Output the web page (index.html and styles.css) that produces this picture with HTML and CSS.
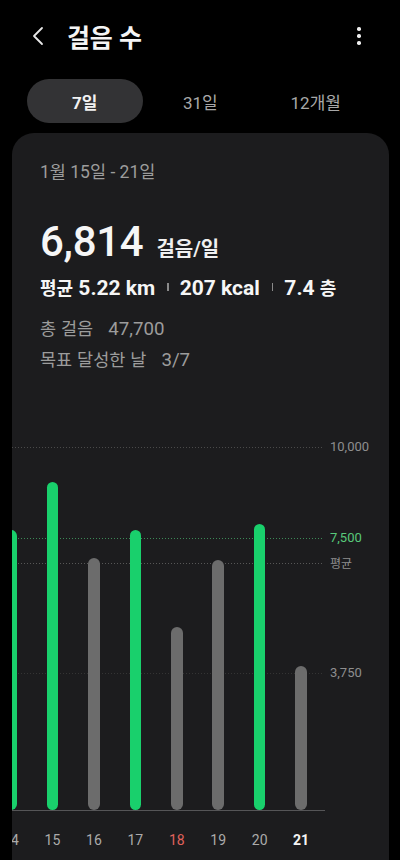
FILE: index.html
```html
<!DOCTYPE html>
<html lang="ko">
<head>
<meta charset="utf-8">
<title>걸음 수</title>
<link rel="stylesheet" href="styles.css">
</head>
<body>
<div class="screen">
  <header class="topbar">
    <button class="back" aria-label="뒤로">
      <svg width="14" height="20" viewBox="0 0 14 20"><path d="M11 2 L3 10 L11 18" fill="none" stroke="#e8e8e8" stroke-width="1.8" stroke-linecap="round" stroke-linejoin="round"/></svg>
    </button>
    <h1 class="title">걸음 수</h1>
    <button class="more" aria-label="더보기">
      <span class="dot"></span><span class="dot"></span><span class="dot"></span>
    </button>
  </header>

  <nav class="tabs">
    <div class="tab active">7일</div>
    <div class="tab">31일</div>
    <div class="tab">12개월</div>
  </nav>

  <section class="card">
    <div class="summary">
      <div class="range">1월 15일 - 21일</div>
      <div class="big">
        <span class="big-num">6,814</span>
        <span class="big-unit">걸음/일</span>
      </div>
      <div class="stats">
        <span class="ko">평균</span><span class="num">&nbsp;5.22 km</span>
        <span class="sep"></span>
        <span class="num">207 kcal</span>
        <span class="sep"></span>
        <span class="num">7.4&nbsp;</span><span class="ko">층</span>
      </div>
      <div class="info"><span class="info-label">총 걸음</span><span class="info-num">47,700</span></div>
      <div class="info"><span class="info-label">목표 달성한 날</span><span class="info-num">3/7</span></div>
    </div>

    <div class="chart">
      <div class="plot">
        <div class="grid g10000" style="bottom: 362px"><span class="ylabel">10,000</span></div>
        <div class="grid g7500" style="bottom: 271px"><span class="ylabel green">7,500</span></div>
        <div class="grid gavg" style="bottom: 246px"><span class="ylabel small">평균</span></div>
        <div class="grid g3750" style="bottom: 136px"><span class="ylabel">3,750</span></div>
        <div class="bars">
          <div class="col"><div class="bar on" style="height: 280px"></div></div>
          <div class="col"><div class="bar on" style="height: 328px"></div></div>
          <div class="col"><div class="bar" style="height: 252px"></div></div>
          <div class="col"><div class="bar on" style="height: 280px"></div></div>
          <div class="col"><div class="bar" style="height: 183px"></div></div>
          <div class="col"><div class="bar" style="height: 250px"></div></div>
          <div class="col"><div class="bar on" style="height: 286px"></div></div>
          <div class="col"><div class="bar" style="height: 144px"></div></div>
        </div>
        <div class="baseline"></div>
      </div>
      <div class="xlabels">
        <div class="xl">14</div>
        <div class="xl">15</div>
        <div class="xl">16</div>
        <div class="xl">17</div>
        <div class="xl red">18</div>
        <div class="xl">19</div>
        <div class="xl">20</div>
        <div class="xl today">21</div>
      </div>
    </div>
  </section>
</div>
</body>
</html>
```
FILE: styles.css
```css
* { box-sizing: border-box; }
html, body {
  margin: 0;
  padding: 0;
  background: #000;
}
body {
  width: 400px;
  height: 860px;
  overflow: hidden;
  font-family: Roboto, "Noto Sans CJK KR", sans-serif;
  color: #fff;
}
.screen {
  width: 400px;
  height: 860px;
  overflow: hidden;
}
.topbar {
  height: 72px;
  display: flex;
  align-items: center;
  padding: 0 0 0 31px;
}
.back, .more {
  background: none;
  border: 0;
  padding: 0;
  margin: 0;
  display: flex;
  cursor: pointer;
}
.back { width: 14px; height: 20px; }
.title {
  margin: 0 0 0 22px;
  font-family: "Noto Sans CJK KR", sans-serif;
  font-weight: 700;
  font-size: 25px;
  line-height: 30px;
  color: #f4f4f4;
  flex: 1;
  letter-spacing: -0.3px;
}
.more {
  flex-direction: column;
  align-items: center;
  gap: 3.6px;
  width: 10px;
  margin-right: 36px;
}
.dot {
  width: 3.4px;
  height: 3.4px;
  border-radius: 50%;
  background: #eee;
}
.tabs {
  margin-top: 7px;
  padding: 0 26.5px 0 27px;
  display: grid;
  grid-template-columns: repeat(3, 1fr);
  height: 44px;
}
.tab {
  display: flex;
  align-items: center;
  justify-content: center;
  border-radius: 22px;
  font-size: 17px;
  color: #a8a8a8;
}
.tab.active {
  background: #333335;
  color: #f2f2f2;
  font-weight: 700;
}
.card {
  margin: 10px 11px 0 12px;
  height: 760px;
  background: #1c1c1e;
  border-radius: 22px;
  overflow: hidden;
}
.summary {
  padding: 27px 0 0 28px;
}
.range {
  font-size: 17.5px;
  line-height: 24px;
  color: #9c9c9c;
}
.big {
  margin-top: 33px;
  display: flex;
  align-items: baseline;
  height: 50px;
}
.big-num {
  font-size: 42px;
  line-height: 50px;
  font-weight: 500;
  color: #f6f6f6;
  letter-spacing: -0.3px;
}
.big-unit {
  margin-left: 13px;
  font-size: 20px;
  font-weight: 600;
  color: #f0f0f0;
}
.stats {
  margin-top: 7px;
  height: 26px;
  display: flex;
  align-items: baseline;
  font-weight: 700;
  color: #f6f6f6;
  white-space: pre;
}
.stats .ko {
  font-family: "Noto Sans CJK KR", sans-serif;
  font-size: 18px;
}
.stats .num {
  font-size: 21px;
  line-height: 26px;
}
.sep {
  align-self: center;
  width: 1.5px;
  height: 8px;
  background: #8a8a8a;
  margin: 0 11px 0 12px;
}
.info {
  display: flex;
  align-items: baseline;
  gap: 15px;
  line-height: 30px;
  color: #9c9c9c;
}
.info-label {
  font-family: "Noto Sans CJK KR", sans-serif;
  font-size: 17.5px;
}
.info-num { font-size: 18.7px; }
.stats + .info { margin-top: 13px; }
.chart {
  margin-top: 0;
}
.plot {
  position: relative;
  height: 435px;
}
.grid {
  position: absolute;
  left: 0;
  width: 310px;
  height: 1px;
  background-image: linear-gradient(to right, var(--c) 1px, transparent 1px);
  background-size: 3px 1px;
}
.g10000 { --c: #4a4a4a; }
.g7500 { --c: #3c8a57; }
.gavg { --c: #575757; }
.g3750 { --c: #343434; }
.ylabel {
  position: absolute;
  left: 318px;
  top: -9px;
  font-size: 13px;
  line-height: 18px;
  color: #8e8e8e;
  white-space: nowrap;
}
.ylabel.green { color: #58c97a; }
.ylabel.small { font-size: 12px; font-family: "Noto Sans CJK KR", sans-serif; }
.bars {
  position: absolute;
  left: -21.7px;
  bottom: 0;
  display: flex;
  align-items: flex-end;
  height: 100%;
}
.col {
  width: 41.45px;
  display: flex;
  justify-content: center;
  align-items: flex-end;
}
.bar {
  width: 11.5px;
  border-radius: 6px;
  background: #6c6c6c;
}
.bar.on { background: #19d06c; }
.baseline {
  position: absolute;
  left: 0;
  bottom: -1px;
  width: 313px;
  height: 1.5px;
  background: #555557;
}
.xlabels {
  display: flex;
  margin-left: -21.7px;
  padding-top: 19px;
}
.xl {
  width: 41.45px;
  text-align: center;
  font-size: 14px;
  line-height: 22px;
  color: #ababab;
}
.xl.red { color: #e0625c; }
.xl.today { color: #f4f4f4; font-weight: 700; }
```
